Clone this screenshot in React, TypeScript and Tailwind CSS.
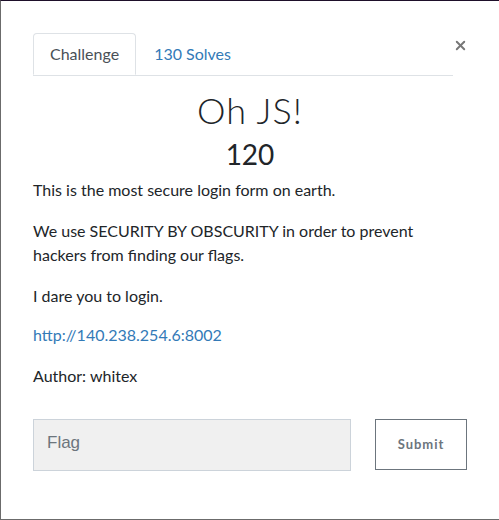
import { X } from "lucide-react";

export default function App() {
  return (
    <div className="w-[499px] h-[520px] bg-white border-t border-t-[#1e0f2a] border-l border-l-[#6b6b6b] border-b border-b-[#6b6b6b] overflow-hidden font-['Lato',sans-serif] text-[#212529]">
      <div className="pl-[32px] pr-[32px] pt-[32px]">
        <div className="flex items-start">
          <div className="flex w-[421px] border-b border-[#dee2e6]">
            <div className="h-[42px] px-[16px] flex items-center border border-[#dee2e6] border-b-white rounded-t-[4px] -mb-px bg-white text-[16px] text-[#495057]">
              Challenge
            </div>
            <div className="h-[42px] px-[18px] flex items-center text-[16px] text-[#337ab7]">130 Solves</div>
          </div>
          <button className="ml-auto mt-[5px] -mr-[1px] text-[#777]">
            <X size={15} strokeWidth={3} />
          </button>
        </div>

        <h2 className="mt-[12px] text-center text-[36px] leading-[44px] font-light tracking-[1px]">Oh JS!</h2>
        <h3 className="mt-[5px] text-center text-[28px] leading-[34px] font-normal">120</h3>

        <div className="mt-[7px] text-[16px] leading-[24px]">
          <p>This is the most secure login form on earth.</p>
          <p className="mt-[17px]">
            We use SECURITY BY OBSCURITY in order to prevent
            <br />
            hackers from finding our flags.
          </p>
          <p className="mt-[17px]">I dare you to login.</p>
          <p className="mt-[15px]">
            <a className="text-[#337ab7]">http://140.238.254.6:8002</a>
          </p>
          <p className="mt-[17px]">Author: whitex</p>
        </div>

        <div className="mt-[31px] flex items-start">
          <input
            placeholder="Flag"
            className="w-[318px] h-[52px] px-[13px] bg-[#f0f0f0] border border-[#ccd3da] font-['Liberation_Sans',sans-serif] text-[17px] placeholder:text-[#6c757d] outline-none pb-[4px]"
          />
          <button className="ml-[24px] w-[92px] h-[51px] border border-[#6c757d] text-[13px] font-bold tracking-[1px] text-[#6c757d]">
            Submit
          </button>
        </div>
      </div>
    </div>
  );
}
